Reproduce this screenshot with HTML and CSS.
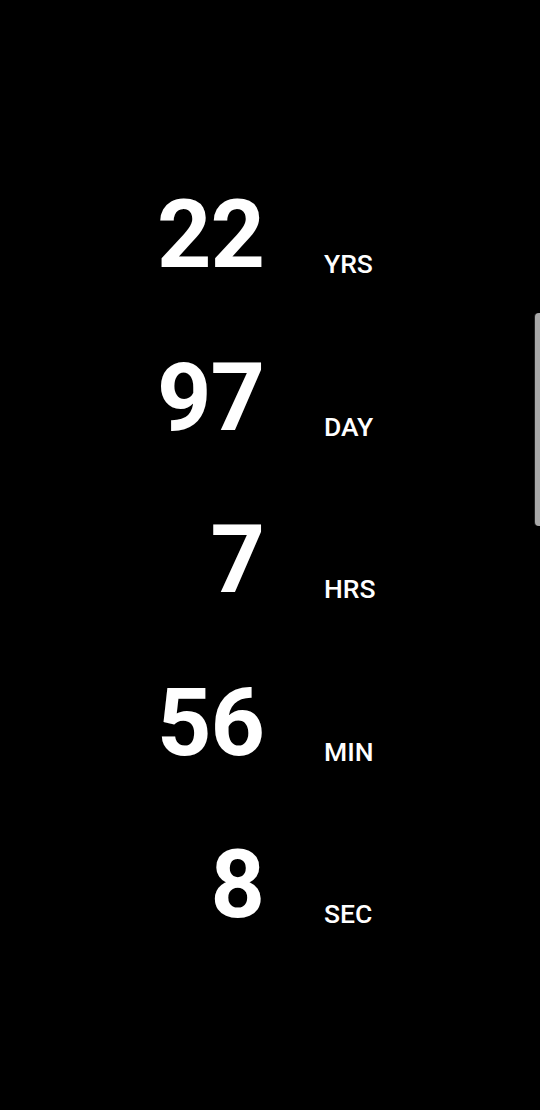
FILE: index.html
```html
<!DOCTYPE html>
<html>
<head>
<meta charset="utf-8">
<link rel="stylesheet" href="styles.css">
</head>
<body>
<main class="clock">
  <div class="row"><span class="num">22</span><span class="unit">YRS</span></div>
  <div class="row"><span class="num">97</span><span class="unit">DAY</span></div>
  <div class="row"><span class="num">7</span><span class="unit">HRS</span></div>
  <div class="row"><span class="num">56</span><span class="unit">MIN</span></div>
  <div class="row"><span class="num">8</span><span class="unit">SEC</span></div>
</main>
<div class="scroll-handle"></div>
</body>
</html>
```
FILE: styles.css
```css
html, body {
  margin: 0;
  padding: 0;
  background: #000;
  height: 100%;
  overflow: hidden;
}
body {
  font-family: Roboto, "Liberation Sans", sans-serif;
  color: #fff;
}
.clock {
  padding-top: 154px;
}
.row {
  font-size: 95px;
  line-height: 162.5px;
  height: 162.5px;
  white-space: nowrap;
}
.num {
  display: inline-block;
  width: 264px;
  text-align: right;
  font-weight: 700;
  letter-spacing: -1px;
}
.unit {
  display: inline-block;
  margin-left: 60px;
  font-size: 26.5px;
  font-weight: 500;
  vertical-align: -6px;
  line-height: 1;
}
.scroll-handle {
  position: absolute;
  right: 0;
  top: 313px;
  width: 5px;
  height: 213px;
  background: #a9a9a9;
  border-radius: 4px 0 0 4px;
  box-shadow: -1px 0 0 #222;
}
```
